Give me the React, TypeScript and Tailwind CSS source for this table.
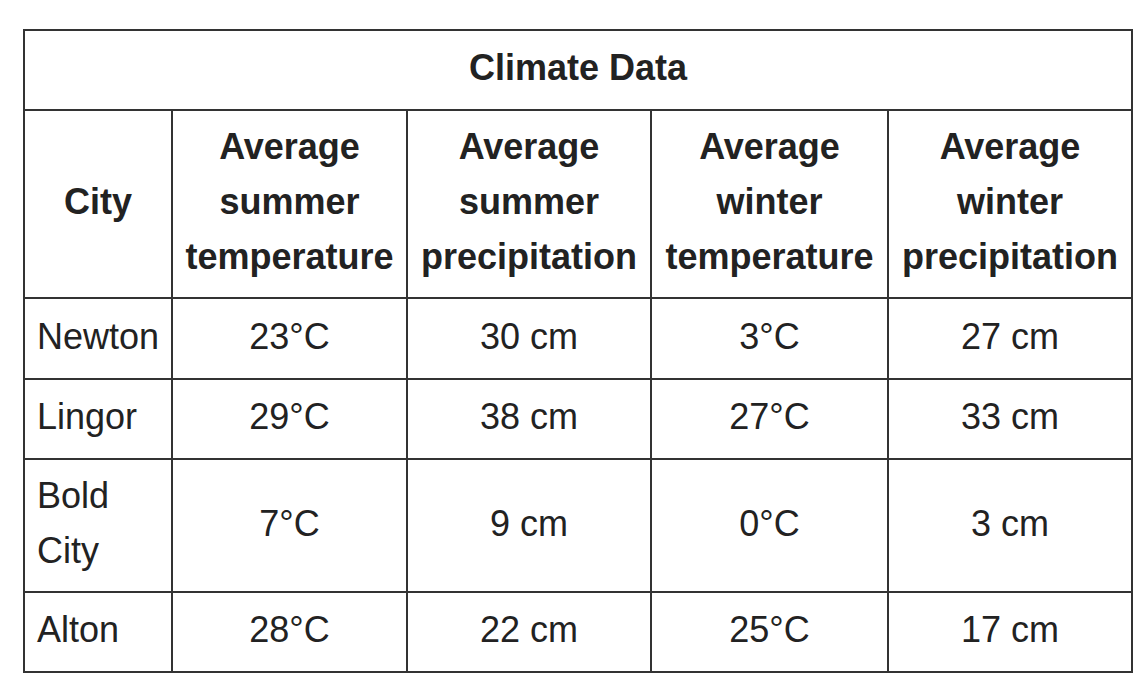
const rows = [
  { city: "Newton", st: "23°C", sp: "30 cm", wt: "3°C", wp: "27 cm", h: "h-[81px]" },
  { city: "Lingor", st: "29°C", sp: "38 cm", wt: "27°C", wp: "33 cm", h: "h-[80px]" },
  { city: "Bold City", st: "7°C", sp: "9 cm", wt: "0°C", wp: "3 cm", h: "h-[133px]" },
  { city: "Alton", st: "28°C", sp: "22 cm", wt: "25°C", wp: "17 cm", h: "h-[80px]" },
];

const cell = "border-2 border-[#333] px-3 pb-[5px] align-middle";

export default function App() {
  return (
    <div className="min-h-[680px] w-[1146px] bg-white pl-[23px] pt-[29px] font-['Liberation_Sans',Arial,sans-serif] text-[36px] leading-[55px] text-[#222]">
      <table className="w-[1108px] table-fixed border-collapse">
        <colgroup>
          <col className="w-[148px]" />
          <col className="w-[235px]" />
          <col className="w-[244px]" />
          <col className="w-[237px]" />
          <col className="w-[244px]" />
        </colgroup>
        <thead>
          <tr className="h-[80px]">
            <th colSpan={5} className={`${cell} text-center font-bold`}>
              Climate Data
            </th>
          </tr>
          <tr className="h-[188px]">
            <th className={`${cell} text-center font-bold`}>City</th>
            <th className={`${cell} text-center font-bold`}>Average summer temperature</th>
            <th className={`${cell} text-center font-bold`}>Average summer precipitation</th>
            <th className={`${cell} text-center font-bold`}>Average winter temperature</th>
            <th className={`${cell} text-center font-bold`}>Average winter precipitation</th>
          </tr>
        </thead>
        <tbody>
          {rows.map((r) => (
            <tr key={r.city} className={r.h}>
              <td className={`${cell} text-left`}>{r.city}</td>
              <td className={`${cell} text-center`}>{r.st}</td>
              <td className={`${cell} text-center`}>{r.sp}</td>
              <td className={`${cell} text-center`}>{r.wt}</td>
              <td className={`${cell} text-center`}>{r.wp}</td>
            </tr>
          ))}
        </tbody>
      </table>
    </div>
  );
}
